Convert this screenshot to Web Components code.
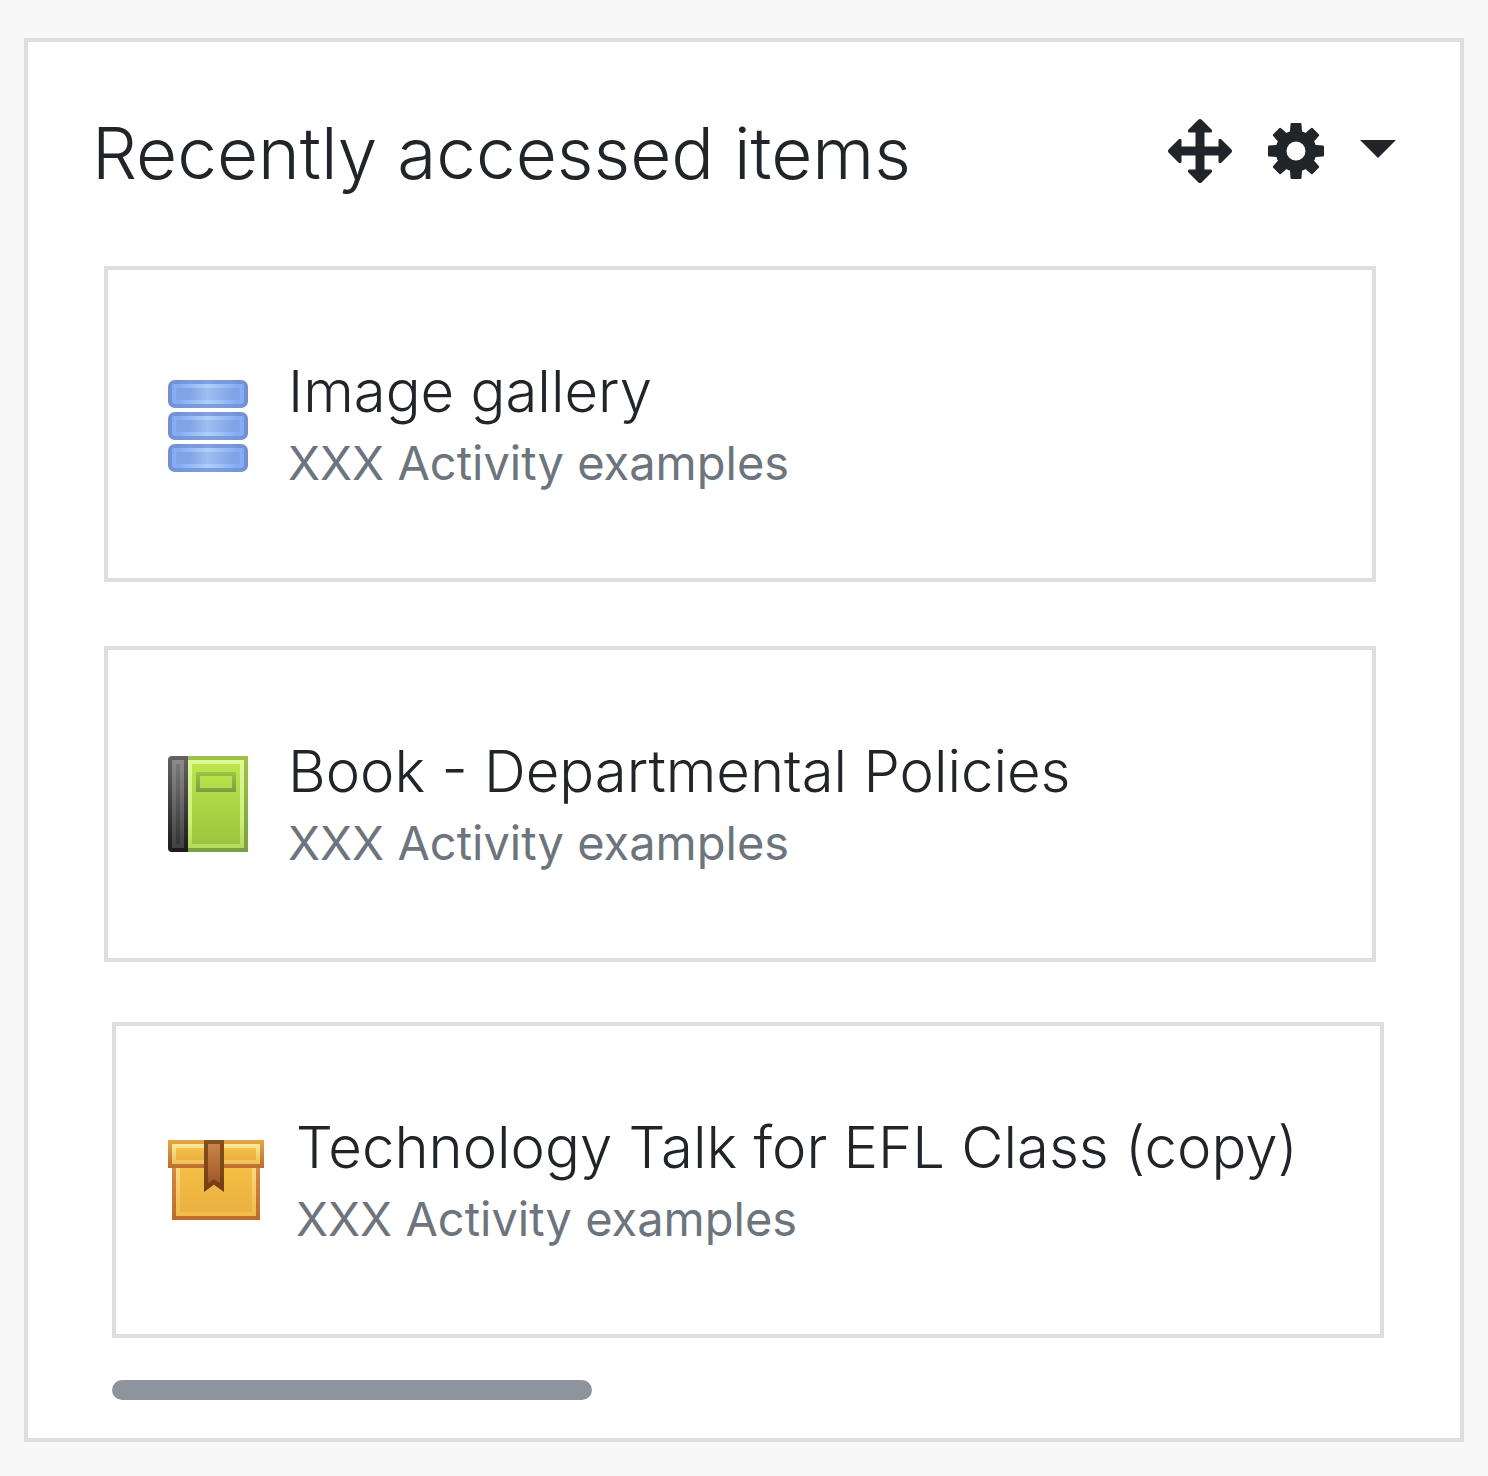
<!DOCTYPE html>
<html lang="en">
<head>
<meta charset="utf-8">
<title>Recently accessed items</title>
<style>
  body {
    margin: 0;
    background: #f7f7f7;
    color: #212529;
    font-family: Inter, "Liberation Sans", sans-serif;
    font-weight: 300;
  }
</style>
</head>
<body>
<recent-block>
  <span slot="title">Recently accessed items</span>
  <recent-item icon="data"><span slot="name">Image gallery</span><span slot="course">XXX Activity examples</span></recent-item>
  <recent-item icon="book"><span slot="name">Book - Departmental Policies</span><span slot="course">XXX Activity examples</span></recent-item>
  <recent-item icon="package"><span slot="name">Technology Talk for EFL Class (copy)</span><span slot="course">XXX Activity examples</span></recent-item>
</recent-block>

<script>
const ICONS = {
  data: `<svg width="80" height="96" viewBox="0 0 20 24">
    <defs>
      <linearGradient id="edge"><stop offset="0" stop-color="#7190d1"/><stop offset=".5" stop-color="#7ea1e3"/><stop offset="1" stop-color="#7190d1"/></linearGradient>
      <linearGradient id="rim"><stop offset="0" stop-color="#85adf5"/><stop offset=".1" stop-color="#85adf5"/><stop offset=".5" stop-color="#aed1f5"/><stop offset=".9" stop-color="#85adf5"/><stop offset="1" stop-color="#85adf5"/></linearGradient>
      <linearGradient id="fill"><stop offset="0" stop-color="#82a3e5"/><stop offset=".2" stop-color="#82a3e5"/><stop offset=".5" stop-color="#9dbef3"/><stop offset=".9" stop-color="#82a3e5"/><stop offset="1" stop-color="#82a3e5"/></linearGradient>
      <g id="disk">
        <rect width="20" height="7" rx="1.7" fill="url(#edge)"/>
        <rect x="1" y="1" width="18" height="5" rx=".6" fill="url(#rim)"/>
        <rect x="2" y="2" width="16" height="3" fill="url(#fill)"/>
      </g>
    </defs>
    <use href="#disk" y="1"/><use href="#disk" y="9"/><use href="#disk" y="17"/>
  </svg>`,
  book: `<svg width="80" height="96" viewBox="0 0 20 24">
    <defs>
      <linearGradient id="cover" x2="0" y2="1"><stop stop-color="#9cc443"/><stop offset="1" stop-color="#789f45"/></linearGradient>
      <linearGradient id="rim" x2="0" y2="1"><stop stop-color="#e0f79b"/><stop offset=".7" stop-color="#d0ed79"/><stop offset="1" stop-color="#b5d85c"/></linearGradient>
      <linearGradient id="fill" x2="0" y2="1"><stop stop-color="#bee64b"/><stop offset="1" stop-color="#9cc440"/></linearGradient>
      <linearGradient id="spine" x2="0" y2="1"><stop stop-color="#626262"/><stop offset="1" stop-color="#1b1b1b"/></linearGradient>
      <linearGradient id="spine2" x2="0" y2="1"><stop stop-color="#8c8c8c"/><stop offset="1" stop-color="#414141"/></linearGradient>
      <linearGradient id="spine3" x2="0" y2="1"><stop stop-color="#777"/><stop offset="1" stop-color="#353535"/></linearGradient>
      <linearGradient id="label" x2="0" y2="1"><stop stop-color="#9cc443"/><stop offset="1" stop-color="#779f43"/></linearGradient>
    </defs>
    <rect x="5" width="15" height="24" fill="url(#cover)"/>
    <rect x="5" y="1" width="14" height="22" fill="url(#rim)"/>
    <rect x="6" y="2" width="12" height="20" fill="url(#fill)"/>
    <path fill="url(#label)" fill-rule="evenodd" d="M7 4h10v5H7zM8 5v3h8V5z"/>
    <path fill="url(#spine)" d="M1 0h4v24H1Q0 24 0 23V1Q0 0 1 0z"/>
    <rect x="1" y="1" width="3" height="22" fill="url(#spine2)"/>
    <rect x="2" y="2" width="1" height="20" fill="url(#spine3)"/>
  </svg>`,
  package: `<svg width="96" height="96" viewBox="0 0 24 24">
    <defs>
      <linearGradient id="lid" x2="0" y2="1"><stop stop-color="#e3a746"/><stop offset="1" stop-color="#bd6b2f"/></linearGradient>
      <linearGradient id="lidrim" x2="0" y2="1"><stop stop-color="#fbe6a3"/><stop offset="1" stop-color="#efc04f"/></linearGradient>
      <linearGradient id="fill" x2="0" y2="1"><stop stop-color="#f5c144"/><stop offset="1" stop-color="#ebb040"/></linearGradient>
      <linearGradient id="box" x2="0" y2="1"><stop stop-color="#d68a42"/><stop offset="1" stop-color="#bd6b2d"/></linearGradient>
      <linearGradient id="boxrim" x2="0" y2="1"><stop stop-color="#f8db84"/><stop offset="1" stop-color="#f0bb49"/></linearGradient>
      <linearGradient id="ribbon" x2="0" y2="1"><stop stop-color="#c88547"/><stop offset="1" stop-color="#a1562a"/></linearGradient>
      <linearGradient id="ribbonedge" x2="0" y2="1"><stop stop-color="#84501f"/><stop offset="1" stop-color="#743e15"/></linearGradient>
    </defs>
    <rect x="1" y="8" width="22" height="14" fill="url(#box)"/>
    <rect x="2" y="8" width="20" height="13" fill="url(#boxrim)"/>
    <rect x="3" y="8" width="18" height="12" fill="url(#fill)"/>
    <rect y="2" width="24" height="7" fill="url(#lid)"/>
    <rect x="1" y="3" width="22" height="5" fill="url(#lidrim)"/>
    <rect x="2" y="4" width="20" height="3" fill="url(#fill)"/>
    <path fill="url(#ribbonedge)" d="M9 2h5v13l-2.500-1.800L9 15z"/>
    <path fill="url(#ribbon)" d="M10 3h3v9.800L11.500 11.800 10 12.800z"/>
  </svg>`
};

class RecentItem extends HTMLElement {
  constructor() {
    super();
    this.attachShadow({ mode: "open" }).innerHTML = `
      <style>
        :host { display: block; --inset: 60px; --gap: 40px; }
        :host([icon="package"]) { --inset: 52px; --gap: 32px; }
        a {
          display: flex; align-items: center; gap: var(--gap);
          padding: 82px var(--inset);
          border: 4px solid #dedede; background: #fff;
          color: inherit; text-decoration: none;
        }
        svg { display: block; flex: none; }
        .text { flex: 1; min-width: 0; white-space: nowrap; }
        .name { font-size: 58px; line-height: 78px; }
        .course { font-size: 47px; line-height: 66px; font-weight: 400; color: #6c757d; }
      </style>
      <a href="#">
        ${ICONS[this.getAttribute("icon")] || ""}
        <div class="text">
          <div class="name"><slot name="name"></slot></div>
          <div class="course"><slot name="course"></slot></div>
        </div>
      </a>`;
  }
}

class BlockActions extends HTMLElement {
  constructor() {
    super();
    this.attachShadow({ mode: "open" }).innerHTML = `
      <style>
        :host { display: flex; align-items: center; gap: 36px; }
        button { display: block; margin: 0; padding: 0; border: 0; background: none; color: inherit; cursor: pointer; }
        svg { display: block; fill: currentColor; }
      </style>
      <button aria-label="Move block"><svg width="64" height="64" viewBox="-32 -32 64 64">
        <defs><path id="arrow" d="M-4.500 0V-18.500H-11Q-12-18.500-12-20V-21L-1.500-31.500Q0-32.500 1.500-31.500L12-21V-20Q12-18.500 11-18.500H4.500V0z"/></defs>
        <use href="#arrow"/><use href="#arrow" transform="rotate(90)"/><use href="#arrow" transform="rotate(180)"/><use href="#arrow" transform="rotate(270)"/>
      </svg></button>
      <button aria-label="Block settings"><svg width="56" height="56" viewBox="-28 -28 56 56">
        <defs><path id="tooth" d="M-6.200-17L-5.500-27Q-5.300-28-4.500-28H4.500Q5.300-28 5.500-27L6.200-17z"/></defs>
        <circle r="15" fill="none" stroke="currentColor" stroke-width="11"/>
        <use href="#tooth"/><use href="#tooth" transform="rotate(45)"/><use href="#tooth" transform="rotate(90)"/><use href="#tooth" transform="rotate(135)"/>
        <use href="#tooth" transform="rotate(180)"/><use href="#tooth" transform="rotate(225)"/><use href="#tooth" transform="rotate(270)"/><use href="#tooth" transform="rotate(315)"/>
      </svg></button>
      <button aria-label="Open menu"><svg width="36" height="24" viewBox="0 0 36 24"><path d="M0 1h36L18 19z"/></svg></button>`;
  }
}

class RecentBlock extends HTMLElement {
  constructor() {
    super();
    this.attachShadow({ mode: "open" }).innerHTML = `
      <style>
        :host { display: block; padding: 38px 24px 34px; }
        section { padding: 66px 64px 38px; border: 4px solid #dedede; background: #fff; }
        header { display: flex; align-items: center; justify-content: space-between; margin-bottom: 68px; }
        h2 { margin: 0; font-size: 71px; line-height: 90px; font-weight: inherit; }
        block-actions { padding-bottom: 4px; }
        .list { display: flex; flex-direction: column; padding: 0 20px 0 12px; }
        ::slotted(recent-item:nth-of-type(2)) { margin: 64px 0 60px; }
        ::slotted(recent-item:nth-of-type(3)) { margin: 0 -8px 0 8px; }
        .thumb { width: 480px; max-width: 90%; height: 20px; margin: 42px 0 0 20px; border-radius: 10px; background: #8e949e; }
      </style>
      <section>
        <header><h2><slot name="title"></slot></h2><block-actions></block-actions></header>
        <div class="list"><slot></slot></div>
        <div class="thumb"></div>
      </section>`;
  }
}

customElements.define("recent-item", RecentItem);
customElements.define("block-actions", BlockActions);
customElements.define("recent-block", RecentBlock);
</script>
</body>
</html>
